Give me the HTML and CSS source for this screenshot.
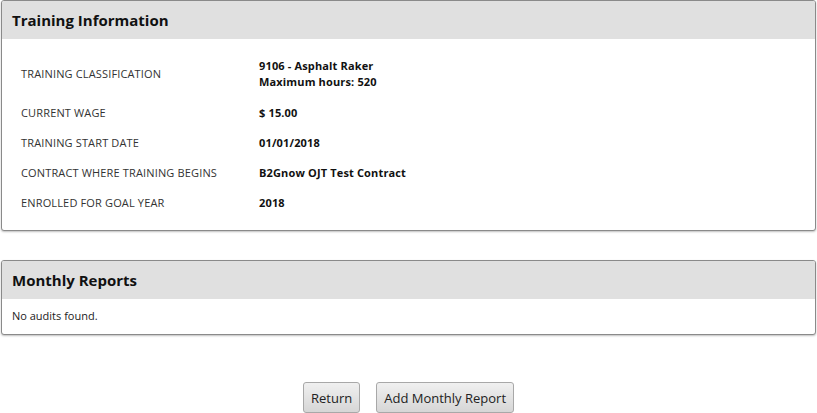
FILE: index.html
```html
<!DOCTYPE html>
<html lang="en">
<head>
    <meta charset="UTF-8">
    <meta name="viewport" content="width=device-width, initial-scale=1.0">
    <title>Training Information</title>
    <link rel="stylesheet" href="styles.css">
</head>
<body>
<div class="panel">
    <div class="panel-header">Training Information</div>
    <div class="panel-body">
        <table class="details">
            <tr class="first">
                <td class="label">TRAINING CLASSIFICATION</td>
                <td class="value">9106 - Asphalt Raker<br>Maximum hours: 520</td>
            </tr>
            <tr>
                <td class="label">CURRENT WAGE</td>
                <td class="value">$ 15.00</td>
            </tr>
            <tr>
                <td class="label">TRAINING START DATE</td>
                <td class="value">01/01/2018</td>
            </tr>
            <tr>
                <td class="label">CONTRACT WHERE TRAINING BEGINS</td>
                <td class="value">B2Gnow OJT Test Contract</td>
            </tr>
            <tr>
                <td class="label">ENROLLED FOR GOAL YEAR</td>
                <td class="value">2018</td>
            </tr>
        </table>
    </div>
</div>

<div class="panel reports">
    <div class="panel-header">Monthly Reports</div>
    <div class="panel-body empty">No audits found.</div>
</div>

<div class="actions">
    <button type="button">Return</button>
    <button type="button">Add Monthly Report</button>
</div>
</body>
</html>
```

FILE: styles.css
```css
body {
    font-family: "Open Sans", Arial, sans-serif;
    margin: 0;
    padding: 0 1px;
    background-color: #fff;
    color: #111;
}

.panel {
    border: 1px solid #8a8a8a;
    border-radius: 3px;
    background-color: #fff;
    box-shadow: 0 1px 2px rgba(0, 0, 0, 0.25);
    overflow: hidden;
}

.panel-header {
    height: 38px;
    line-height: 38px;
    padding: 0 10px;
    background-color: #e0e0e0;
    font-size: 15px;
    font-weight: bold;
    color: #111;
}

.panel-body {
    padding: 12px 0 12px 0;
}

.details {
    border-collapse: collapse;
    font-size: 11px;
}

.details td {
    padding: 7px 0;
    line-height: 16px;
    vertical-align: middle;
}

.details .first td {
    padding-bottom: 8px;
}

.details .label {
    width: 238px;
    padding-left: 19px;
    color: #333;
    letter-spacing: 0.15px;
}

.details .value {
    font-weight: bold;
    color: #111;
    letter-spacing: 0.15px;
}

.reports {
    margin-top: 29px;
}

.panel-body.empty {
    padding: 9px 10px 10px;
    font-size: 11px;
    line-height: 16px;
    color: #222;
}

.actions {
    display: flex;
    justify-content: center;
    gap: 16px;
    margin-top: 47px;
}

button {
    height: 31px;
    padding: 0 7px;
    font-family: "Open Sans", Arial, sans-serif;
    font-size: 13px;
    color: #222;
    background: linear-gradient(#f0f0f0, #d6d6d6);
    border: 1px solid #a8a8a8;
    border-radius: 3px;
    cursor: pointer;
}

button:hover {
    background: linear-gradient(#f6f6f6, #dedede);
}
```
